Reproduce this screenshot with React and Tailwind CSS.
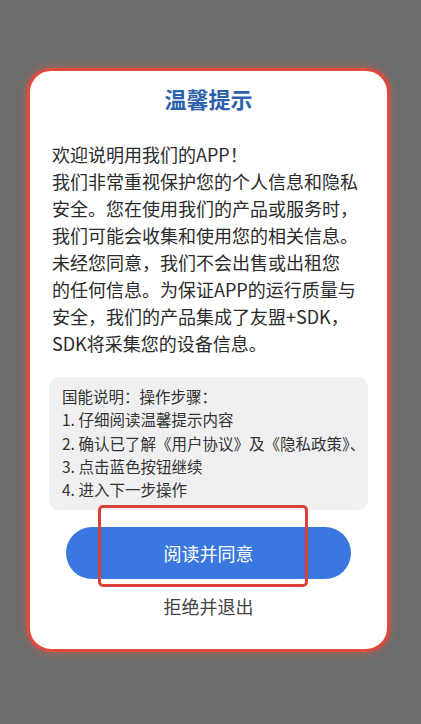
export default function App() {
  const body = [
    "欢迎说明用我们的APP！",
    "我们非常重视保护您的个人信息和隐私",
    "安全。您在使用我们的产品或服务时，",
    "我们可能会收集和使用您的相关信息。",
    "未经您同意，我们不会出售或出租您",
    "的任何信息。为保证APP的运行质量与",
    "安全，我们的产品集成了友盟+SDK，",
    "SDK将采集您的设备信息。",
  ];
  const steps = [
    "国能说明：操作步骤：",
    "1. 仔细阅读温馨提示内容",
    "2. 确认已了解《用户协议》及《隐私政策》、",
    "3. 点击蓝色按钮继续",
    "4. 进入下一步操作",
  ];

  return (
    <div
      className="w-[421px] h-[724px] bg-[#6d6d6d] pt-[68px] overflow-hidden"
      style={{ fontFamily: '"Noto Sans CJK SC", "Noto Sans", sans-serif' }}
    >
      <div className="ml-[27px] w-[363px] h-[584px] bg-white rounded-[24px] border-[3px] border-[#e24a3d] shadow-[0_0_10px_rgba(240,90,70,0.6)] flex flex-col">
        <h1 className="mt-[12px] text-center text-[22px] font-bold text-[#2c62ad] leading-[30px]">
          温馨提示
        </h1>

        <div className="mt-[28px] px-[19px]">
          <div className="pl-[3px] text-[18px] leading-[27px] text-[#2b2b2b] whitespace-nowrap">
            {body.map((line) => (
              <div key={line}>{line}</div>
            ))}
          </div>

          <div className="mt-[20px] rounded-[10px] bg-[#f0f0f2] pl-[13px] pt-[8px] pb-[9px] text-[15.5px] leading-[23.3px] text-[#333] whitespace-nowrap">
            {steps.map((line) => (
              <div key={line}>{line}</div>
            ))}
          </div>
        </div>

        <div className="relative mt-[17px] flex justify-center">
          <button className="w-[285px] h-[52px] rounded-full bg-[#3a78e0] text-white text-[18px]">
            阅读并同意
          </button>
          <div className="absolute left-[68px] top-[-22px] w-[210px] h-[82px] border-[3px] border-[#d9413a] rounded-[5px]"></div>
        </div>

        <div className="mt-[14px] text-center text-[18px] text-[#444] leading-[26px]">
          拒绝并退出
        </div>
      </div>
    </div>
  );
}
